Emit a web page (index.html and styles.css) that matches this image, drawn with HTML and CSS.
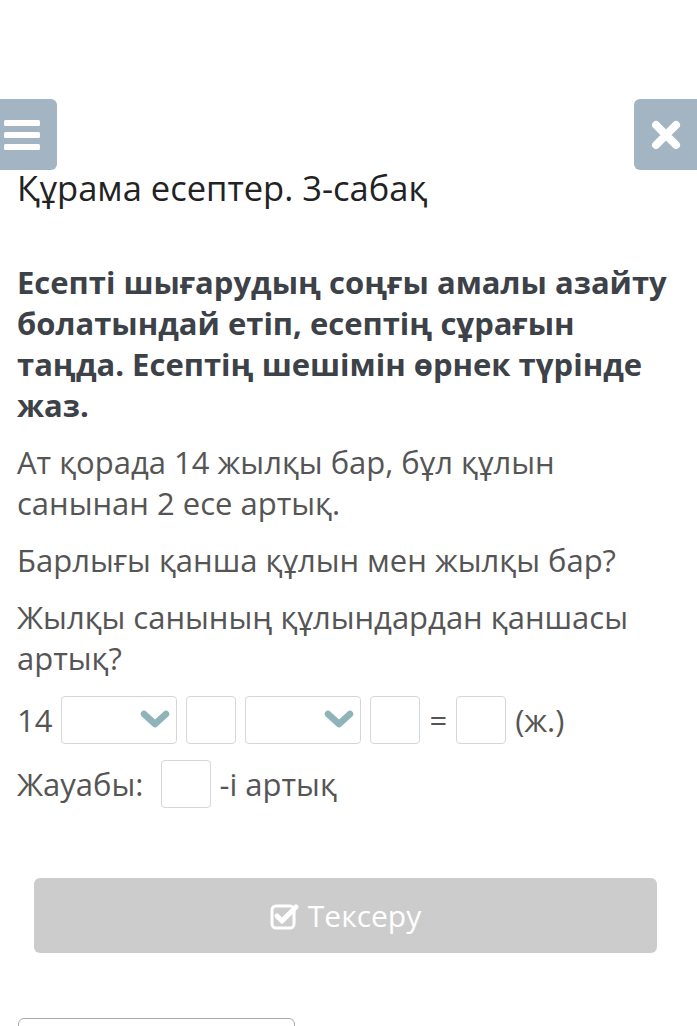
FILE: index.html
```html
<!DOCTYPE html>
<html lang="kk">
<head>
<meta charset="utf-8">
<link rel="stylesheet" href="styles.css">
</head>
<body>
<div class="page">
  <div class="topbar">
    <button class="tb-btn menu" aria-label="menu">
      <svg width="36" height="30" viewBox="0 0 36 30"><rect x="0" y="0" width="36" height="6" rx="1.5" fill="#fff"/><rect x="0" y="12" width="36" height="6" rx="1.5" fill="#fff"/><rect x="0" y="24" width="36" height="6" rx="1.5" fill="#fff"/></svg>
    </button>
    <button class="tb-btn close" aria-label="close">
      <svg width="30" height="30" viewBox="0 0 30 30"><path d="M5 5 L25 25 M25 5 L5 25" stroke="#fff" stroke-width="8" stroke-linecap="round"/></svg>
    </button>
  </div>
  <h1 class="title">Құрама есептер. 3-сабақ</h1>
  <div class="content">
    <p class="task">Есепті шығарудың соңғы амалы азайту болатындай етіп, есептің сұрағын таңда. Есептің шешімін өрнек түрінде жаз.</p>
    <p class="text">Ат қорада 14 жылқы бар, бұл құлын санынан 2 есе артық.</p>
    <p class="text">Барлығы қанша құлын мен жылқы бар?</p>
    <p class="text">Жылқы санының құлындардан қаншасы артық?</p>
    <div class="row expr">
      <span class="lbl">14</span>
      <span class="sel"><svg width="30" height="20" viewBox="0 0 30 20"><path d="M4 4 L15 14 L26 4" fill="none" stroke="#8fb3b8" stroke-width="6.5" stroke-linecap="round" stroke-linejoin="round"/></svg></span>
      <span class="box"></span>
      <span class="sel"><svg width="30" height="20" viewBox="0 0 30 20"><path d="M4 4 L15 14 L26 4" fill="none" stroke="#8fb3b8" stroke-width="6.5" stroke-linecap="round" stroke-linejoin="round"/></svg></span>
      <span class="box"></span>
      <span class="lbl">=</span>
      <span class="box"></span>
      <span class="lbl">(ж.)</span>
    </div>
    <div class="row answer">
      <span class="lbl">Жауабы:</span>
      <span class="box"></span>
      <span class="lbl">-і артық</span>
    </div>
  </div>
  <div class="actions">
    <button class="check">
      <svg width="30" height="28" viewBox="0 0 30 28"><rect x="2" y="4" width="22" height="22" rx="4" fill="none" stroke="#fff" stroke-width="3"/><path d="M7 14 L12 19 L26 5" fill="none" stroke="#fff" stroke-width="5" stroke-linecap="round" stroke-linejoin="round"/></svg>
      <span>Тексеру</span>
    </button>
  </div>
  <div class="bottom-box"></div>
</div>
</body>
</html>
```
FILE: styles.css
```css
html, body {
  margin: 0;
  padding: 0;
  background: #fff;
}
.page {
  font-family: "Open Sans", "Noto Sans", sans-serif;
  color: #555;
  overflow: hidden;
  height: 1026px;
}
.topbar {
  margin-top: 99px;
  height: 71px;
  display: flex;
  justify-content: space-between;
}
.tb-btn {
  border: none;
  background: #a3b5c2;
  display: flex;
  align-items: center;
  justify-content: center;
  padding: 0;
  height: 71px;
}
.tb-btn.menu {
  width: 57px;
  border-radius: 0 6px 6px 0;
  padding-right: 14px;
}
.tb-btn.close {
  width: 63px;
  border-radius: 6px 0 0 6px;
}
.title {
  margin: -4px 0 0 17px;
  font-weight: 400;
  font-size: 34.5px;
  line-height: 44px;
  color: #222;
}
.content {
  padding: 0 24px 0 17px;
  margin-top: 52px;
}
.task {
  margin: 0;
  font-weight: 700;
  font-size: 31px;
  line-height: 41px;
  color: #3d4148;
}
.text {
  margin: 16px 0 0;
  font-size: 31px;
  line-height: 41px;
  color: #555;
}
.row {
  display: flex;
  align-items: center;
  font-size: 31px;
  color: #555;
}
.expr {
  margin-top: 17px;
  gap: 9px;
}
.answer {
  margin-top: 16px;
  gap: 8px;
}
.answer .box { margin-left: 10px; }
.lbl { line-height: 41px; }
.sel {
  width: 116px;
  height: 48px;
  box-sizing: border-box;
  border: 1px solid #d6d6d6;
  border-radius: 4px;
  display: flex;
  align-items: center;
  justify-content: flex-end;
  padding-right: 6px;
}
.box {
  width: 50px;
  height: 48px;
  box-sizing: border-box;
  border: 1px solid #d6d6d6;
  border-radius: 4px;
}
.actions {
  padding: 0 40px 0 34px;
  margin-top: 70px;
}
.check {
  width: 100%;
  height: 75px;
  border: none;
  border-radius: 6px;
  background: #cccccc;
  color: #fff;
  font-family: "Open Sans", "Noto Sans", sans-serif;
  font-size: 30px;
  display: flex;
  align-items: center;
  justify-content: center;
  gap: 8px;
}
.bottom-box {
  margin: 65px 0 0 18px;
  width: 275px;
  height: 40px;
  border: 1px solid #aaa;
  border-radius: 6px;
}
```
